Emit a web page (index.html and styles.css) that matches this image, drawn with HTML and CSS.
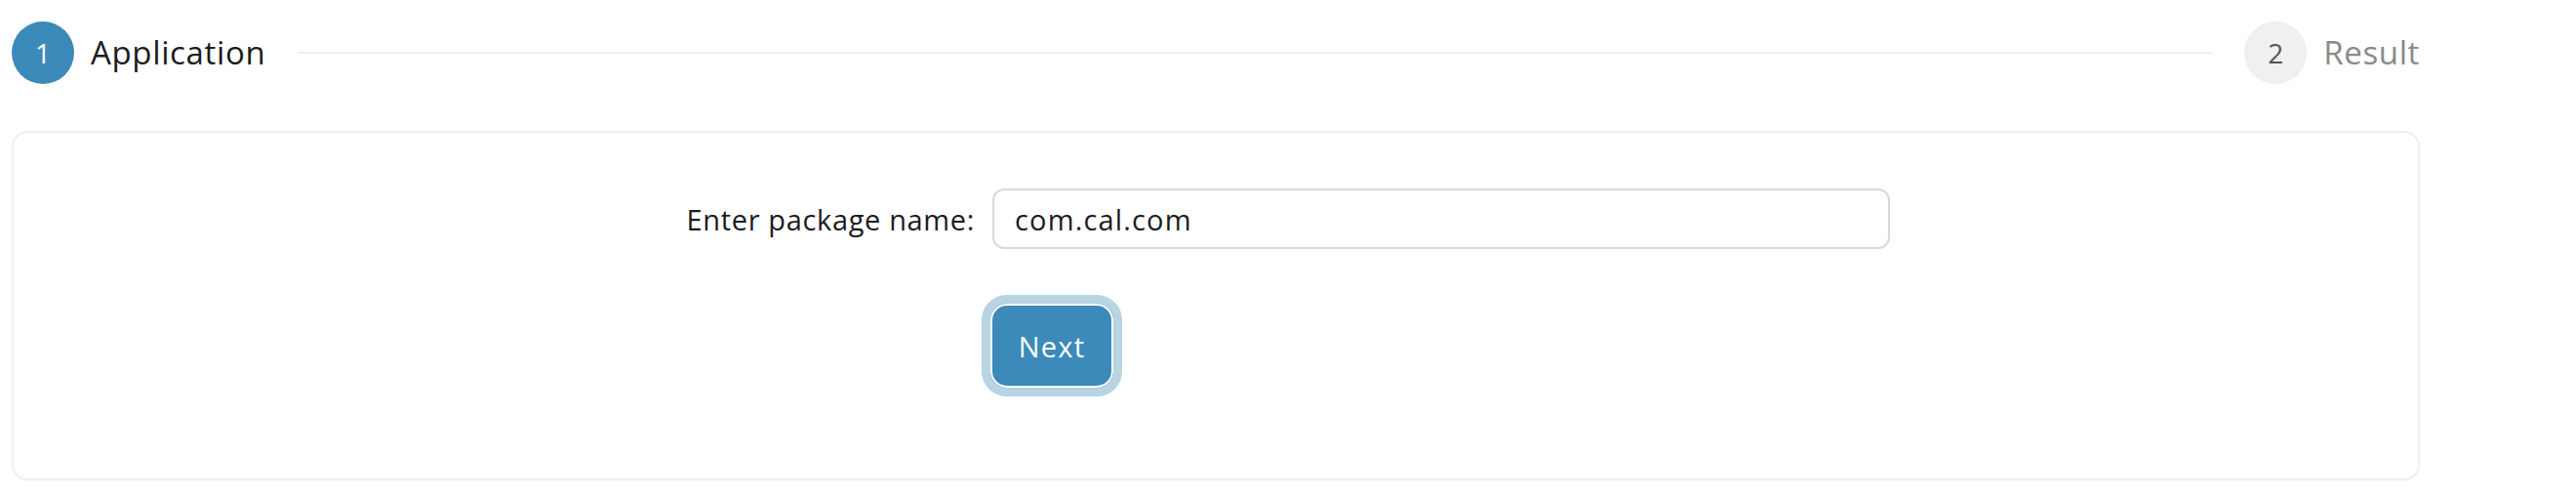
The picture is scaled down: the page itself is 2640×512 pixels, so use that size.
FILE: index.html
```html
<!DOCTYPE html>
<html lang="en">
<head>
<meta charset="utf-8">
<title>Package lookup</title>
<link rel="stylesheet" href="styles.css">
</head>
<body>
<div class="page">
  <div class="steps">
    <div class="step step-active">
      <span class="step-icon">1</span>
      <span class="step-title">Application</span>
    </div>
    <div class="step-tail"></div>
    <div class="step step-wait">
      <span class="step-icon">2</span>
      <span class="step-title">Result</span>
    </div>
  </div>
  <div class="card">
    <form class="form">
      <div class="form-row">
        <label class="form-label" for="pkg">Enter package name:</label>
        <input class="input" id="pkg" type="text" value="com.cal.com">
      </div>
      <div class="form-row form-actions">
        <button class="btn" type="button">Next</button>
      </div>
    </form>
  </div>
</div>
</body>
</html>
```

FILE: styles.css
```css
* { box-sizing: border-box; }
html, body { margin: 0; padding: 0; background: #fff; }
body {
  font-family: "Open Sans", "Liberation Sans", sans-serif;
  color: #1c1c1c;
  letter-spacing: 0.04em;
}
.page {
  width: 2468px;
  margin-left: 12px;
  padding-top: 22px;
}
.steps {
  display: flex;
  align-items: center;
  height: 64px;
}
.step {
  display: flex;
  align-items: center;
  gap: 17px;
}
.step-icon {
  width: 64px;
  height: 64px;
  border-radius: 50%;
  display: flex;
  align-items: center;
  justify-content: center;
  font-size: 28px;
  letter-spacing: 0;
}
.step-title {
  font-size: 33px;
  line-height: 64px;
}
.step-active .step-icon { background: #3c8ab9; color: #fff; }
.step-active .step-title { color: #1c1c1c; }
.step-wait .step-icon { background: #f0f0f0; color: #555; }
.step-wait .step-title { color: #8a8a8a; }
.step-tail {
  flex: 1;
  height: 2px;
  background: #efefef;
  margin: 0 32px 0 33px;
}
.card {
  margin-top: 48px;
  height: 358px;
  border: 2px solid #efefef;
  border-radius: 16px;
  padding-top: 57px;
}
.form-row {
  display: flex;
  align-items: center;
}
.form-label {
  width: 1003px;
  padding-right: 18px;
  text-align: right;
  font-size: 29px;
  color: #1c1c1c;
}
.input {
  width: 920px;
  height: 62px;
  border: 2px solid #d9d9d9;
  border-radius: 12px;
  padding: 0 21px;
  font-family: inherit;
  font-size: 29px;
  letter-spacing: 0.04em;
  color: #1c1c1c;
  outline: none;
}
.form-actions {
  margin-top: 47px;
  padding-left: 992px;
}
.btn {
  width: 144px;
  height: 104px;
  border-radius: 26px;
  border: 9px solid #b8d3e1;
  background: #3c8ab9;
  box-shadow: inset 0 0 0 2px #fff;
  color: #fff;
  font-family: inherit;
  font-size: 29px;
  letter-spacing: 0.04em;
  padding: 0;
  cursor: pointer;
}
```
